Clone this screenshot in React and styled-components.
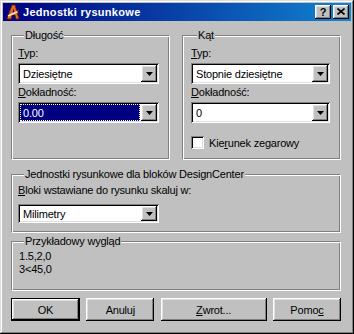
import styled, { createGlobalStyle } from "styled-components";

const GlobalStyle = createGlobalStyle`
  html, body {
    margin: 0;
    padding: 0;
    background: #c0c0c0;
  }
  body {
    font-family: "Liberation Sans", Arial, sans-serif;
    font-size: 11px;
    letter-spacing: -0.2px;
    color: #000;
  }
`;

const raised = `
  box-shadow: inset -1px -1px #000, inset 1px 1px #fff, inset -2px -2px #808080, inset 2px 2px #dfdfdf;
`;

const sunken = `
  box-shadow: inset 1px 1px #808080, inset -1px -1px #fff, inset 2px 2px #000, inset -2px -2px #dfdfdf;
`;

const Window = styled.div`
  width: 354px;
  height: 334px;
  box-sizing: border-box;
  padding: 3px;
  background: #c0c0c0;
  box-shadow: inset -1px -1px #000, inset 1px 1px #dfdfdf, inset -2px -2px #808080, inset 2px 2px #fff;
  display: flex;
  flex-direction: column;
`;

const TitleBar = styled.div`
  height: 18px;
  flex: none;
  display: flex;
  align-items: center;
  padding: 0 2px;
  background: linear-gradient(to right, #000080, #1084d0);
  color: #fff;
`;

const Title = styled.span`
  flex: 1;
  margin-left: 2px;
  font-weight: bold;
  font-size: 11px;
  letter-spacing: 0.3px;
  white-space: nowrap;
`;

const CaptionButton = styled.button`
  width: 16px;
  height: 14px;
  padding: 0 0 1px 0;
  border: 0;
  margin-left: ${p => p.$gap || 0}px;
  background: #c0c0c0;
  ${raised}
  display: flex;
  align-items: center;
  justify-content: center;
  font: bold 11px "Liberation Sans", Arial, sans-serif;
  color: #000;
`;

const Body = styled.div`
  flex: 1;
  display: flex;
  flex-direction: column;
  padding: 8px 10px 0 8px;
`;

const TopRow = styled.div`
  display: grid;
  grid-template-columns: 1fr 1fr;
  column-gap: 12px;
`;

const GroupBox = styled.fieldset`
  margin: ${p => p.$mt || 0}px 0 0 0;
  padding: ${p => p.$pad || "0 5px 0 6px"};
  min-width: 0;
  box-sizing: border-box;
  height: ${p => p.$h}px;
  border: 1px solid;
  border-color: #808080 #fff #fff #808080;
  box-shadow: inset 1px 1px #fff, inset -1px -1px #808080;
  display: flex;
  flex-direction: column;
  align-items: flex-start;
`;

const Legend = styled.legend`
  margin-left: 6px;
  padding: 0 1px;
  line-height: 13px;
  background: #c0c0c0;
`;

const Label = styled.div`
  line-height: 13px;
  margin: ${p => p.$mt || 0}px 0 ${p => (p.$mb === undefined ? 3 : p.$mb)}px;
  white-space: nowrap;
`;

const Key = styled.span`
  text-decoration: underline;
`;

const Combo = styled.div`
  width: ${p => p.$w}px;
  height: ${p => p.$h || 21}px;
  box-sizing: border-box;
  padding: 2px;
  margin-bottom: 2px;
  background: #fff;
  ${sunken}
  display: flex;
`;

const ComboText = styled.div`
  flex: 1;
  display: flex;
  align-items: center;
  padding-left: 2px;
  margin-right: 1px;
  border: 1px ${p => (p.$selected ? "dotted #fff" : "solid transparent")};
  background: ${p => (p.$selected ? "#000080" : "transparent")};
  color: ${p => (p.$selected ? "#fff" : "#000")};
  white-space: nowrap;
`;

const DropButton = styled.div`
  width: 16px;
  flex: none;
  background: #c0c0c0;
  ${raised}
  display: flex;
  align-items: center;
  justify-content: center;
`;

const CheckRow = styled.div`
  display: flex;
  align-items: center;
  gap: 5px;
  margin-top: 11px;
`;

const CheckBox = styled.span`
  width: 13px;
  height: 13px;
  box-sizing: border-box;
  background: #fff;
  ${sunken}
`;

const Sample = styled.div`
  margin-top: 2px;
  margin-left: 1px;
  line-height: 13px;
`;

const ButtonRow = styled.div`
  display: flex;
  justify-content: space-between;
  margin-top: 7px;
`;

const Button = styled.button`
  width: ${p => p.$w}px;
  height: 23px;
  padding: 0;
  box-sizing: border-box;
  font: 11px "Liberation Sans", Arial, sans-serif;
  letter-spacing: -0.2px;
  color: #000;
  background: #c0c0c0;
  border: ${p => (p.$default ? "1px solid #000" : "0")};
  ${raised}
`;

function AppIcon() {
  return (
    <svg width="16" height="16" viewBox="0 0 16 16">
      <path d="M2 15 L7 1 L10 1 L14 15 L11 15 L10 11 L7 11 L6 15 Z" fill="#ec6a1c" stroke="#7a1800" strokeWidth="0.8" />
      <path d="M7.6 8.5 L8.5 4.5 L9.4 8.5 Z" fill="#000080" />
      <path d="M3 12 L14 7" stroke="#f4e8c8" strokeWidth="1.6" />
      <path d="M12.5 7.6 L15 6.6" stroke="#000" strokeWidth="1.2" />
    </svg>
  );
}

function Arrow() {
  return (
    <svg width="7" height="4" viewBox="0 0 7 4">
      <path d="M0 0 H7 L3.5 4 Z" fill="#000" />
    </svg>
  );
}

function CloseGlyph() {
  return (
    <svg width="8" height="7" viewBox="0 0 8 7">
      <path d="M0.5 0.5 L7.5 6.5 M7.5 0.5 L0.5 6.5" stroke="#000" strokeWidth="1.6" />
    </svg>
  );
}

function ComboBox({ value, width, height, selected }) {
  return (
    <Combo $w={width} $h={height}>
      <ComboText $selected={selected}>{value}</ComboText>
      <DropButton>
        <Arrow />
      </DropButton>
    </Combo>
  );
}

export default function App() {
  return (
    <>
      <GlobalStyle />
      <Window>
        <TitleBar>
          <AppIcon />
          <Title>Jednostki rysunkowe</Title>
          <CaptionButton>?</CaptionButton>
          <CaptionButton $gap={2}>
            <CloseGlyph />
          </CaptionButton>
        </TitleBar>
        <Body>
          <TopRow>
            <GroupBox $h={131}>
              <Legend>Długość</Legend>
              <Label $mt={5}><Key>T</Key>yp:</Label>
              <ComboBox value="Dziesiętne" width={141} />
              <Label><Key>D</Key>okładność:</Label>
              <ComboBox value="0.00" width={141} selected />
            </GroupBox>
            <GroupBox $h={131} $pad="0 5px 0 8px">
              <Legend>Kąt</Legend>
              <Label $mt={5}><Key>T</Key>yp:</Label>
              <ComboBox value="Stopnie dziesiętne" width={139} />
              <Label><Key>D</Key>okładność:</Label>
              <ComboBox value="0" width={139} />
              <CheckRow>
                <CheckBox />
                <span>Kie<Key>r</Key>unek zegarowy</span>
              </CheckRow>
            </GroupBox>
          </TopRow>
          <GroupBox $h={65} $mt={8}>
            <Legend>Jednostki rysunkowe dla bloków DesignCenter</Legend>
            <Label $mt={3} $mb={7}><Key>B</Key>loki wstawiane do rysunku skaluj w:</Label>
            <ComboBox value="Milimetry" width={141} height={19} />
          </GroupBox>
          <GroupBox $h={56} $mt={2}>
            <Legend>Przykładowy wygląd</Legend>
            <Sample>
              1.5,2,0
              <br />
              3&lt;45,0
            </Sample>
          </GroupBox>
          <ButtonRow>
            <Button $w={69} $default>OK</Button>
            <Button $w={68}>Anuluj</Button>
            <Button $w={106}><Key>Z</Key>wrot...</Button>
            <Button $w={68}>Pomo<Key>c</Key></Button>
          </ButtonRow>
        </Body>
      </Window>
    </>
  );
}
